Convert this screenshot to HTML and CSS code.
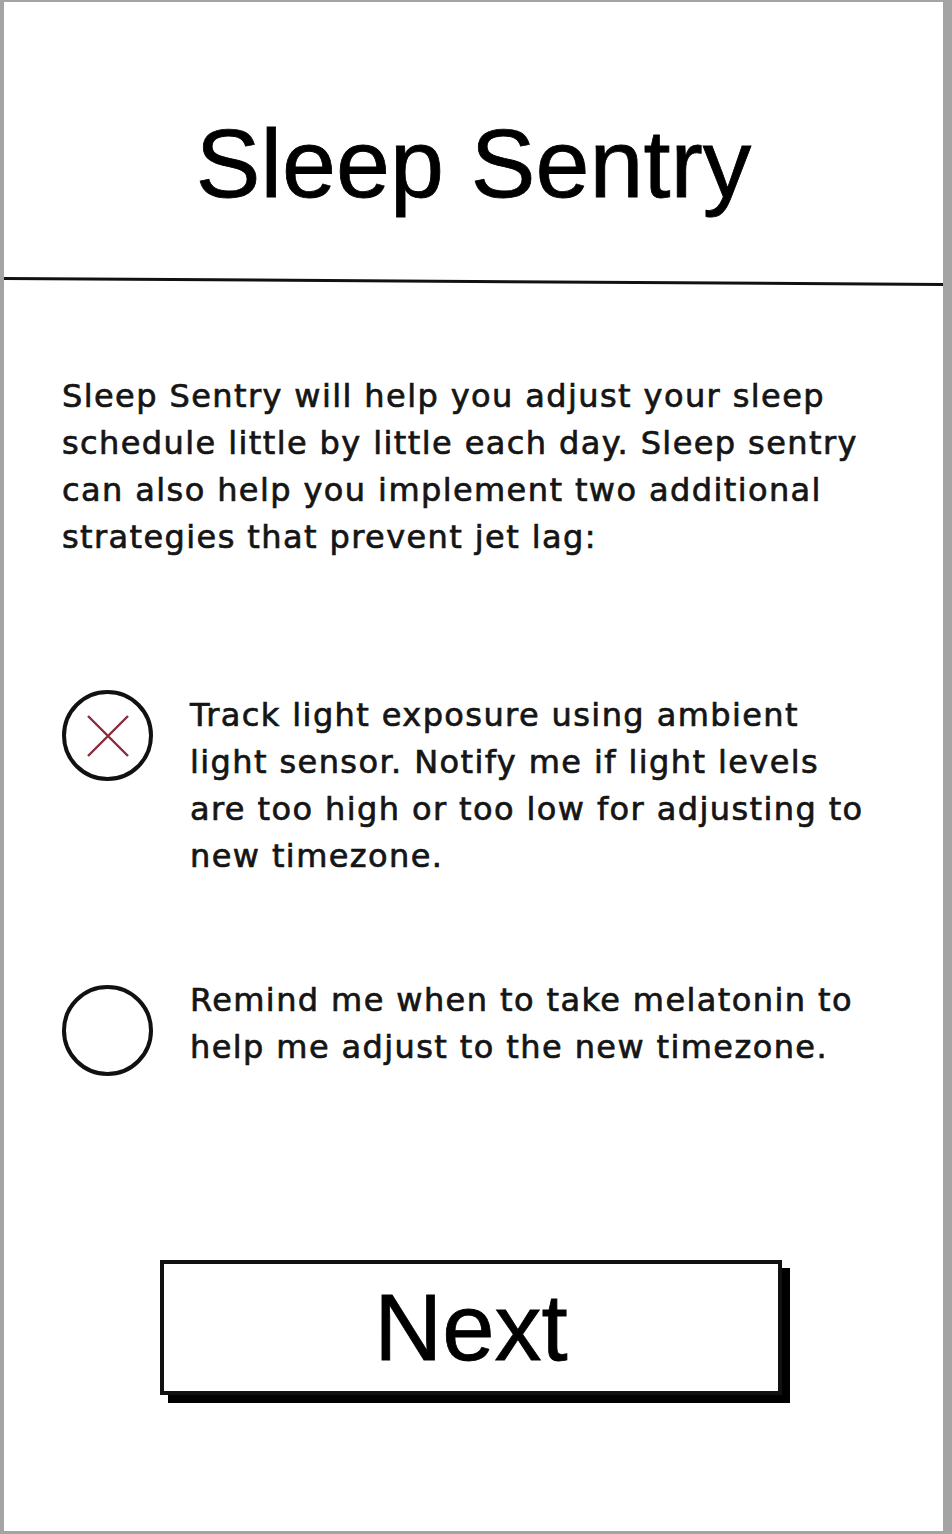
FILE: index.html
```html
<!DOCTYPE html>
<html lang="en">

<head>
    <meta charset="UTF-8">
    <meta name="viewport" content="width=device-width, initial-scale=1.0">
    <title>Sleep Sentry</title>
    <link rel="stylesheet" href="styles.css">
</head>

<body>
    <div class="screen">
        <!-- Cabeçalho -->
        <div class="header">
            <h1>Sleep Sentry</h1>
        </div>
        <div class="divider"></div>

        <div class="content">
            <p class="intro">Sleep Sentry will help you adjust your sleep<br>
                schedule little by little each day. Sleep sentry<br>
                can also help you implement two additional<br>
                strategies that prevent jet lag:</p>

            <!-- Opções -->
            <div class="option option-first">
                <span class="check checked">
                    <svg width="44" height="44" viewBox="0 0 44 44">
                        <path d="M2 2 L42 42 M42 2 L2 42" stroke="#8b2c3d" stroke-width="2.4" fill="none" />
                    </svg>
                </span>
                <p class="option-text">Track light exposure using ambient<br>
                    light sensor. Notify me if light levels<br>
                    are too high or too low for adjusting to<br>
                    new timezone.</p>
            </div>

            <div class="option option-second">
                <span class="check"></span>
                <p class="option-text">Remind me when to take melatonin to<br>
                    help me adjust to the new timezone.</p>
            </div>

            <button class="next-button">Next</button>
        </div>
    </div>
</body>

</html>
```

FILE: styles.css
```css
/* Estilos Gerais */
body,
html {
    margin: 0;
    padding: 0;
    background: #fff;
}

.screen {
    height: 1534px;
    box-sizing: border-box;
    border-left: 4px solid #a4a4a4;
    border-top: 2px solid #a4a4a4;
    border-right: 9px solid #a4a4a4;
    border-bottom: 3px solid #a4a4a4;
    background: #fff;
    color: #151515;
    overflow: hidden;
}

/* Cabeçalho */
.header {
    height: 278px;
    box-sizing: border-box;
    padding-top: 113px;
    text-align: center;
}

.header h1 {
    margin: 0;
    font-family: 'Liberation Sans', Arial, sans-serif;
    font-weight: normal;
    font-size: 97px;
    line-height: 97px;
    color: #000;
    -webkit-text-stroke: 0.8px #000;
}

.divider {
    height: 3px;
    margin: 0 -8px 0 -4px;
    background: #111;
    transform: rotate(0.36deg);
}

/* Conteúdo */
.content {
    padding: 90px 58px 0;
    font-family: 'DejaVu Sans', Verdana, sans-serif;
    font-size: 32px;
    line-height: 47px;
    letter-spacing: 1.4px;
    -webkit-text-stroke: 0.7px #151515;
}

.intro {
    margin: 0;
}

.option {
    display: flex;
    align-items: flex-start;
    gap: 37px;
}

.option-first {
    margin-top: 129px;
}

.option-first .option-text {
    padding-top: 2px;
}

.option-second {
    margin-top: 97px;
}

.option-second .check {
    margin-top: 8px;
}

.check {
    flex: none;
    width: 83px;
    height: 83px;
    border: 4px solid #111;
    border-radius: 50%;
    display: flex;
    align-items: center;
    justify-content: center;
}

.option-text {
    margin: 0;
    white-space: nowrap;
}

/* Botão */
.next-button {
    display: flex;
    align-items: center;
    justify-content: center;
    width: 622px;
    height: 135px;
    margin: 184px 0 0 98px;
    padding: 0;
    background: #fff;
    border: 4px solid #111;
    box-shadow: 8px 8px 0 #000;
    font-family: 'Liberation Sans', Arial, sans-serif;
    font-size: 94px;
    line-height: 94px;
    letter-spacing: 0;
    color: #000;
    -webkit-text-stroke: 0.8px #000;
    cursor: pointer;
}
```
